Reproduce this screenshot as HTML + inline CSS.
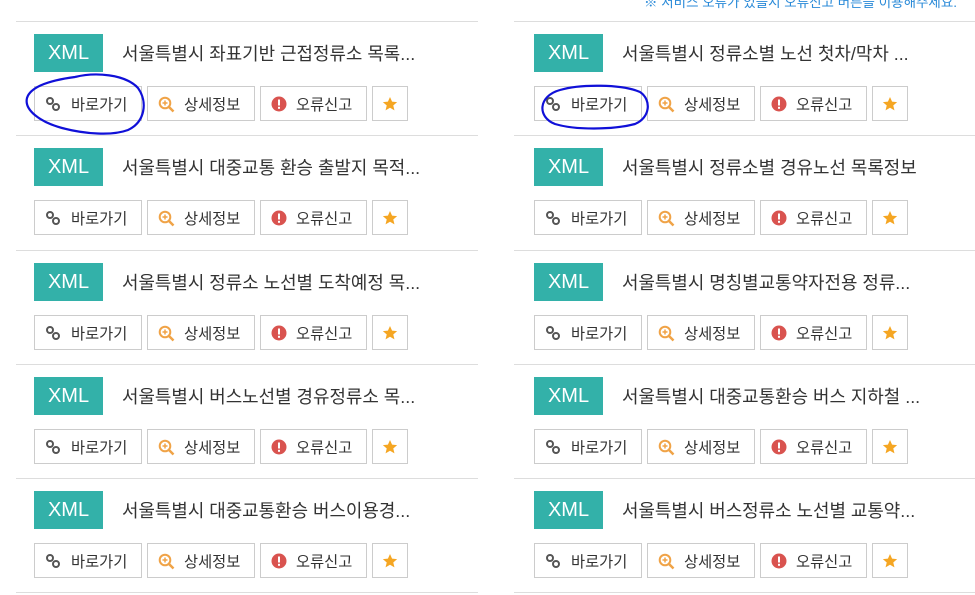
<!DOCTYPE html>
<html><head><meta charset="utf-8"><style>
*{margin:0;padding:0;box-sizing:border-box}
body{width:975px;height:595px;background:#fff;position:relative;overflow:hidden;font-family:"Liberation Sans","Noto Sans CJK KR",sans-serif;color:#333}
.note{position:absolute;right:18px;top:-9px;font-size:13.5px;color:#2a8ad8;white-space:nowrap}
.sep{position:absolute;height:1px;background:#ddd}
.badge{position:absolute;width:69px;height:38px;background:#33b1a9;color:#fff;font-size:20px;line-height:38px;text-align:center}
.title{position:absolute;font-size:17.9px;color:#333;white-space:nowrap;height:38px;display:flex;align-items:center}
.btn{position:absolute;height:35px;border:1px solid #ccc;background:#fff;font-size:15.3px;white-space:nowrap}
.btn svg{position:absolute;top:9px}
.btn span{position:absolute;top:0;height:33px;display:flex;align-items:center;padding-top:1px}
</style></head><body>
<div class="note">※ 서비스 오류가 있을시 오류신고 버튼을 이용해주세요.</div>
<div id="c"></div>
<script>
const L=["서울특별시 좌표기반 근접정류소 목록...","서울특별시 대중교통 환승 출발지 목적...","서울특별시 정류소 노선별 도착예정 목...","서울특별시 버스노선별 경유정류소 목...","서울특별시 대중교통환승 버스이용경..."];
const R=["서울특별시 정류소별 노선 첫차/막차 ...","서울특별시 정류소별 경유노선 목록정보","서울특별시 명칭별교통약자전용 정류...","서울특별시 대중교통환승 버스 지하철 ...","서울특별시 버스정류소 노선별 교통약..."];
const link='<svg width="16" height="16" viewBox="0 0 16 16"><g fill="none" stroke="#555" stroke-width="2"><circle cx="5" cy="5" r="3"/><circle cx="11" cy="11" r="3"/></g></svg>';
const mag='<svg width="17" height="17" viewBox="0 0 17 17"><circle cx="7" cy="7" r="5.3" fill="none" stroke="#f0a347" stroke-width="2"/><path d="M11 11l4.5 4.5" stroke="#f0a347" stroke-width="2.5"/><path d="M7 4.5v5M4.5 7h5" stroke="#f0a347" stroke-width="1.5"/></svg>';
const err='<svg width="16" height="16" viewBox="0 0 16 16"><circle cx="8" cy="8" r="7.5" fill="#d9534f"/><rect x="7" y="3.5" width="2" height="6" fill="#fff"/><rect x="7" y="10.8" width="2" height="2" fill="#fff"/></svg>';
const star='<svg width="16" height="16" viewBox="0 0 24 24"><path d="M12 1.5l3.1 7 7.6.7-5.8 5 1.8 7.4L12 17.7l-6.7 3.9 1.8-7.4-5.8-5 7.6-.7z" fill="#f5a623"/></svg>';
let h='';
[[16,34,L],[514,534,R]].forEach(([sx,bx,arr])=>{
 for(let i=0;i<5;i++){
  const y=21+i*114.3;
  h+=`<div class="sep" style="left:${sx}px;width:${sx==16?462:461}px;top:${Math.round(y)}px"></div>`;
  const t=Math.round(y+13);
  h+=`<div class="badge" style="left:${bx}px;top:${t}px">XML</div>`;
  h+=`<div class="title" style="left:${bx+88}px;top:${t}px">${arr[i]}</div>`;
  const b=Math.round(y+65);
  h+=`<div class="btn" style="left:${bx}px;top:${b}px;width:108px">${link.replace('<svg','<svg style="left:10px"')}<span style="left:36px">바로가기</span></div>`;
  h+=`<div class="btn" style="left:${bx+113}px;top:${b}px;width:108px">${mag.replace('<svg','<svg style="left:10px"')}<span style="left:36px">상세정보</span></div>`;
  h+=`<div class="btn" style="left:${bx+226}px;top:${b}px;width:107px">${err.replace('<svg','<svg style="left:10px"')}<span style="left:35px">오류신고</span></div>`;
  h+=`<div class="btn" style="left:${bx+338}px;top:${b}px;width:36px">${star.replace('<svg','<svg style="left:9px"')}</div>`;
 }
 h+=`<div class="sep" style="left:${sx}px;width:${sx==16?462:461}px;top:592px"></div>`;
});
h+=`<svg style="position:absolute;left:0;top:0" width="975" height="595"><g fill="none" stroke="#1010d8" stroke-width="2.2"><path d="M75 77C95 72 125 74 138 88C148 102 145 122 128 130C112 136 85 134 62 128C40 122 24 110 27 98C30 88 45 81 75 77"/><path d="M560 90C580 84 622 84 640 92C652 100 650 118 635 124C612 130 575 130 555 124C537 117 538 96 560 90"/></g></svg>`;
document.getElementById('c').innerHTML=h;
</script>
</body></html>
